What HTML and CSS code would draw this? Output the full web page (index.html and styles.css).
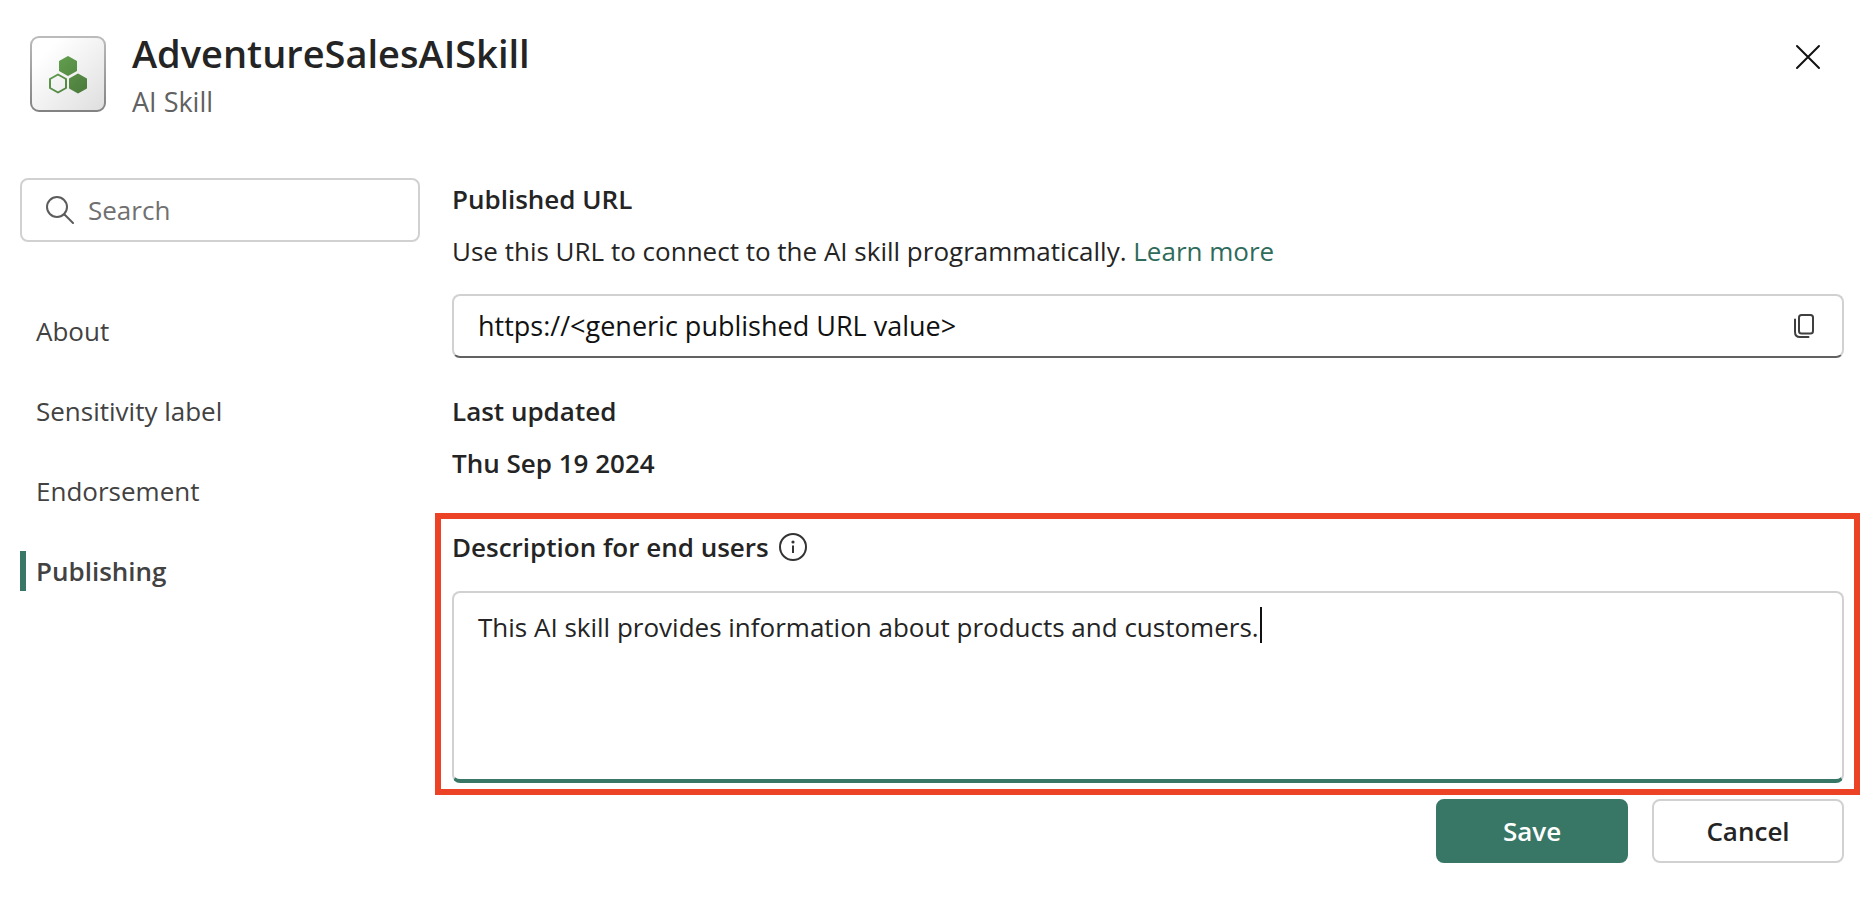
FILE: index.html
```html
<!DOCTYPE html>
<html lang="en">
<head>
<meta charset="utf-8">
<meta name="viewport" content="width=device-width, initial-scale=1">
<title>AdventureSalesAISkill</title>
<link rel="stylesheet" href="styles.css">
</head>
<body>
<div class="dialog" role="dialog" aria-labelledby="dialog-title">
  <header class="header">
    <svg class="item-icon" viewBox="0 0 76 76" aria-hidden="true">
      <defs>
        <linearGradient id="tile" x1="0" y1="0" x2="1" y2="1"><stop offset="0.2" stop-color="#fff"/><stop offset="1" stop-color="#dedede"/></linearGradient>
        <linearGradient id="edge" x1="0" y1="0" x2="0" y2="1"><stop offset="0" stop-color="#bbb"/><stop offset="1" stop-color="#828282"/></linearGradient>
        <linearGradient id="leaf" gradientUnits="userSpaceOnUse" x1="20" y1="22" x2="58" y2="60"><stop offset="0" stop-color="#64a350"/><stop offset="1" stop-color="#4a773b"/></linearGradient>
      </defs>
      <rect x="1" y="1" width="74" height="74" rx="8" fill="url(#tile)" stroke="url(#edge)" stroke-width="2"/>
      <g fill="url(#leaf)" stroke="url(#leaf)" stroke-linejoin="round">
        <path stroke-width="2" d="M38 21L46 25.500V34.500L38 39L30 34.500V25.500Z"/>
        <path stroke-width="2" d="M48 38.500L56 43V52L48 56.500L40 52V43Z"/>
        <path fill="none" stroke-width="2" d="M28 38.500L36 43V52L28 56.500L20 52V43Z"/>
      </g>
    </svg>
    <div class="titles">
      <h1 class="title" id="dialog-title">AdventureSalesAISkill</h1>
      <p class="subtitle">AI Skill</p>
    </div>
    <button class="icon-button close" type="button" aria-label="Close">
      <svg width="26" height="26" viewBox="0 0 26 26" fill="none" stroke="#111" stroke-width="2" stroke-linecap="round"><path d="M2 2L24 24M24 2L2 24"/></svg>
    </button>
  </header>
  <div class="body">
    <aside class="sidebar">
      <label class="field search">
        <svg width="28" height="28" viewBox="0 0 28 28" fill="none" stroke="#5c5c5c" stroke-width="2" stroke-linecap="round" aria-hidden="true"><circle cx="11" cy="11" r="10"/><path d="M18.500 18.500L27 27"/></svg>
        <input class="text-input" type="search" placeholder="Search" aria-label="Search">
      </label>
      <nav class="nav">
        <a class="nav-item" href="#about">About</a>
        <a class="nav-item" href="#sensitivity">Sensitivity label</a>
        <a class="nav-item" href="#endorsement">Endorsement</a>
        <a class="nav-item selected" href="#publishing" aria-current="page">Publishing</a>
      </nav>
    </aside>
    <main class="content">
      <section class="group">
        <label class="heading" for="url">Published URL</label>
        <p class="hint">Use this URL to connect to the AI skill programmatically. <a class="link" href="#learn-more">Learn more</a></p>
        <div class="field url-field">
          <input class="text-input" id="url" type="text" value="https://&lt;generic published URL value&gt;" readonly>
          <button class="icon-button" type="button" aria-label="Copy URL">
            <svg width="20" height="24" viewBox="0 0 20 24" fill="none" stroke="#3f3f3f" stroke-width="2" stroke-linecap="round"><rect x="5" y="1" width="14" height="18.500" rx="2.500"/><path d="M1 5.500V18Q1 23 6 23H14.500"/></svg>
          </button>
        </div>
      </section>
      <section class="group updated">
        <h2 class="heading">Last updated</h2>
        <p class="heading">Thu Sep 19 2024</p>
      </section>
      <section class="highlight">
        <div class="label-row">
          <label class="heading" for="description">Description for end users</label>
          <svg width="28" height="28" viewBox="0 0 28 28" fill="none" stroke="#333" stroke-width="2" aria-hidden="true"><circle cx="14" cy="14" r="13"/><path d="M14 12.500V20"/><circle cx="14" cy="9" r="1.600" fill="#333" stroke="none"/></svg>
        </div>
        <div class="description">
          <textarea class="textarea" id="description">This AI skill provides information about products and customers.</textarea>
          <span class="caret"></span>
        </div>
      </section>
      <footer class="actions">
        <button class="button primary" type="button">Save</button>
        <button class="button" type="button">Cancel</button>
      </footer>
    </main>
  </div>
</div>
</body>
</html>
```
FILE: styles.css
```css
* { box-sizing: border-box; }

body {
  margin: 0;
  background: #fff;
  color: #242424;
  font-family: "Segoe UI", "Open Sans", "Noto Sans", sans-serif;
  font-size: 26px;
  line-height: 40px;
}

h1, h2, p { margin: 0; }

button, input, textarea { font: inherit; color: inherit; }

.dialog { padding: 28px 8px 56px 20px; }

.header {
  display: flex;
  align-items: flex-start;
  padding: 0 16px 0 10px;
}

.item-icon {
  width: 76px;
  height: 76px;
  margin-top: 8px;
}

.titles { flex: 1; margin-left: 26px; }

.title {
  font-size: 38px;
  font-weight: 600;
  line-height: 50px;
}

.subtitle {
  color: #616161;
  font-size: 27px;
  line-height: 48px;
}

.icon-button {
  display: flex;
  align-items: center;
  justify-content: center;
  padding: 8px;
  border: 0;
  background: none;
}

.close { margin: 8px 15px 0 0; }

.body {
  display: flex;
  align-items: flex-start;
  gap: 15px;
  margin-top: 48px;
}

.sidebar {
  flex: 0 0 400px;
  min-width: 0;
  padding-top: 4px;
}

.field {
  display: flex;
  align-items: center;
  height: 64px;
  border: 2px solid #d1d1d1;
  border-radius: 8px;
}

.text-input {
  flex: 1;
  min-width: 0;
  padding: 0;
  border: 0;
  outline: 0;
  background: none;
}

.search { gap: 14px; padding: 0 24px; }
.search .text-input::placeholder { color: #707070; opacity: 1; }

.nav {
  display: flex;
  flex-direction: column;
  gap: 40px;
  margin-top: 69px;
}

.nav-item {
  padding-left: 10px;
  border-left: 6px solid transparent;
  color: #424242;
  text-decoration: none;
}

.nav-item.selected {
  border-color: #387766;
  font-weight: 600;
}

.content { flex: 1; min-width: 0; }

.group {
  display: flex;
  flex-direction: column;
  gap: 12px;
  padding: 5px 16px 0 17px;
}

.heading {
  font-size: 26px;
  font-weight: 600;
  line-height: 40px;
}

.link { color: #2f6b5b; text-decoration: none; }

.url-field {
  margin-top: 11px;
  padding: 0 20px 0 24px;
  border-bottom-color: #616161;
  color: #111;
  font-size: 27px;
}

.updated { margin-top: 28px; }

.highlight {
  margin-top: 30px;
  padding: 8px 10px 6px 11px;
  border: 6px solid #ec4226;
}

.label-row {
  display: flex;
  align-items: center;
  gap: 10px;
  margin-bottom: 24px;
}

.description { position: relative; }

.textarea {
  display: block;
  width: 100%;
  height: 192px;
  padding: 14px 24px;
  border: 2px solid #d1d1d1;
  border-bottom: 4px solid #387766;
  border-radius: 8px;
  outline: 0;
  resize: none;
}

.caret {
  position: absolute;
  top: 16px;
  left: 808px;
  width: 2px;
  height: 36px;
  background: #111;
}

.actions {
  display: flex;
  justify-content: flex-end;
  gap: 24px;
  padding: 4px 16px 0;
}

.button {
  width: 192px;
  height: 64px;
  border: 2px solid #d1d1d1;
  border-radius: 8px;
  background: #fff;
  font-weight: 600;
}

.primary {
  border-color: #387766;
  background: #387766;
  color: #fff;
}
```
